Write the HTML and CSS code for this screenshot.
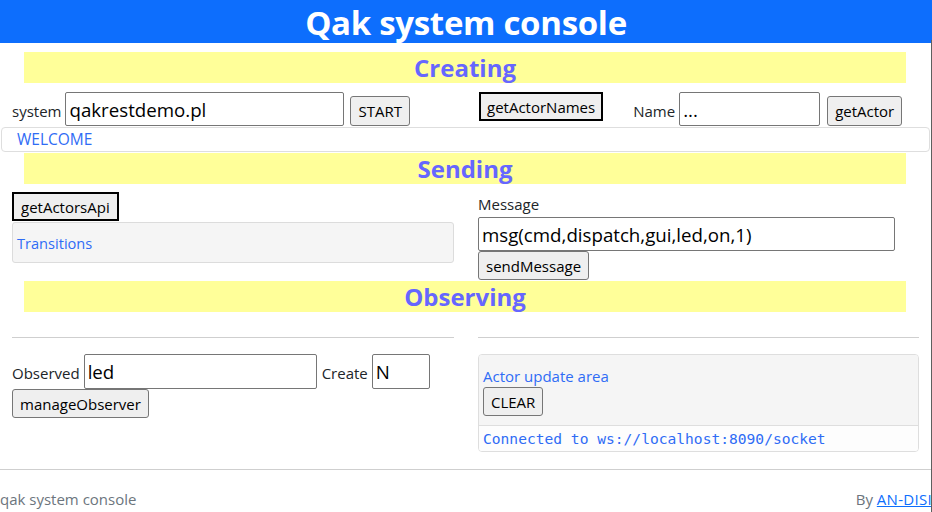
FILE: index.html
```html
<!DOCTYPE html>
<html lang="en">
<head>
<meta charset="utf-8">
<title>Qak system console</title>
<link rel="stylesheet" href="styles.css">
</head>
<body>
<header class="topbar"><h1>Qak system console</h1></header>

<h2 class="band band-first">Creating</h2>
<div class="cols create-row">
  <div class="col">
    <div class="inline-group">
      <label class="lbl">system</label>
      <input class="field field-system" type="text" value="qakrestdemo.pl">
      <button class="btn">START</button>
    </div>
  </div>
  <div class="col col-right-create">
    <button class="btn btn-focus">getActorNames</button>
    <div class="inline-group name-group">
      <label class="lbl">Name</label>
      <input class="field field-name" type="text" value="...">
      <button class="btn">getActor</button>
    </div>
  </div>
</div>
<div class="welcome">WELCOME</div>

<h2 class="band">Sending</h2>
<div class="cols send-row">
  <div class="col">
    <button class="btn btn-focus btn-api">getActorsApi</button>
    <div class="panel transitions">Transitions</div>
  </div>
  <div class="col">
    <label class="lbl lbl-block">Message</label>
    <input class="field field-msg" type="text" value="msg(cmd,dispatch,gui,led,on,1)">
    <button class="btn btn-block">sendMessage</button>
  </div>
</div>

<h2 class="band band-observe">Observing</h2>
<div class="cols observe-row">
  <div class="col">
    <hr class="rule">
    <div class="inline-group">
      <label class="lbl">Observed</label>
      <input class="field field-observed" type="text" value="led">
      <label class="lbl lbl-create">Create</label>
      <input class="field field-create" type="text" value="N">
    </div>
    <button class="btn btn-block">manageObserver</button>
  </div>
  <div class="col col-right">
    <hr class="rule">
    <div class="card">
      <div class="card-body">
        <div class="card-title">Actor update area</div>
        <button class="btn btn-block">CLEAR</button>
      </div>
      <div class="card-footer"><code>Connected to ws://localhost:8090/socket</code></div>
    </div>
  </div>
</div>

<footer class="footer">
  <span class="foot-left">qak system console</span>
  <span class="foot-right">By <a href="#">AN-DISI</a></span>
</footer>
<div class="edge"></div>
</body>
</html>
```

FILE: styles.css
```css
html, body {
  margin: 0;
  padding: 0;
}
body {
  width: 932px;
  height: 512px;
  overflow: hidden;
  position: relative;
  background: #fff;
  color: #212529;
  font-family: "Open Sans", "Noto Sans", sans-serif;
  font-size: 15px;
}
.topbar {
  background: #0d6efd;
  height: 43px;
  box-sizing: border-box;
  padding-top: 2px;
  display: flex;
  justify-content: center;
  align-items: flex-start;
}
.topbar h1 {
  margin: 0;
  color: #fff;
  font-size: 33px;
  font-weight: 700;
  line-height: 41px;
  letter-spacing: -0.3px;
}
.band {
  margin: 1px 26px 0 24px;
  height: 31px;
  line-height: 31px;
  background: #ffff99;
  color: #6666ff;
  font-size: 24px;
  font-weight: 700;
  text-align: center;
}
.band-first { margin-top: 9px; }
.band-observe { margin-top: 1px; }

.cols {
  display: grid;
  grid-template-columns: 466px 466px;
}
.col {
  padding: 0 12px;
  min-width: 0;
}
.col-right { padding-right: 13px; }

.create-row { padding-top: 9px; }
.inline-group {
  display: flex;
  align-items: baseline;
  gap: 4px;
}
.lbl {
  font-size: 15px;
  color: #212529;
}
.lbl-create { margin-left: 1px; }
.lbl-block {
  display: block;
  height: 25px;
  line-height: 24px;
}
.field {
  box-sizing: border-box;
  height: 34px;
  border: 1px solid #767676;
  border-radius: 2px;
  padding: 0 3px;
  font-family: "Open Sans", "Noto Sans", sans-serif;
  font-size: 18.7px;
  color: #000;
  background: #fff;
}
.field-system { width: 279px; }
.field-name { width: 141px; }
.field-msg { width: 417px; display: block; }
.field-observed { width: 233px; height: 35px; }
.field-create { width: 58px; height: 35px; }
.btn {
  box-sizing: border-box;
  height: 29px;
  padding: 0 7px;
  border: 1px solid #767676;
  border-radius: 3px;
  background: #efefef;
  color: #000;
  font-family: "Open Sans", "Noto Sans", sans-serif;
  font-size: 15px;
}
.inline-group .btn {
  margin-left: 2px;
  height: 30px;
  align-self: flex-end;
}
.btn-focus {
  height: 29px;
  border: 2px solid #000;
  border-radius: 0;
  padding: 0 6px;
}
.btn-api { padding: 0 7px; }
.btn-block { display: block; }
.col-right-create {
  display: flex;
  align-items: flex-start;
  padding-left: 13px;
}
.name-group { margin-left: 30px; }
.name-group .btn { margin-left: 3px; }

.welcome {
  box-sizing: border-box;
  margin: 1px 2px 0 1px;
  height: 25px;
  line-height: 23px;
  border: 1px solid #dedede;
  border-radius: 4px;
  padding-left: 15px;
  color: #2f6cf5;
  font-size: 15.5px;
}

.send-row { padding-top: 8px; }
.panel {
  box-sizing: border-box;
  background: #f5f5f5;
  border: 1px solid #dcdcdc;
  border-radius: 3px;
}
.transitions {
  margin-top: 1px;
  height: 41px;
  padding: 0 4px;
  line-height: 41px;
  color: #2f6cf5;
  font-size: 14.6px;
}

.observe-row { padding-top: 0; }
.rule {
  margin: 25px 0 16px;
  border: 0;
  border-top: 1px solid #cfcfcf;
  height: 0;
}
.card {
  box-sizing: border-box;
  height: 98px;
  border: 1px solid #dedede;
  border-radius: 4px;
  overflow: hidden;
}
.card-body {
  background: #f5f5f5;
  height: 71px;
  padding: 10px 4px 0;
  box-sizing: border-box;
  border-bottom: 1px solid #dedede;
}
.card-title {
  color: #2f6cf5;
  font-size: 15px;
  line-height: 22px;
}
.card-footer {
  background: #fdfdfd;
  height: 25px;
  padding: 0 4px;
  line-height: 25px;
}
.card-footer code {
  font-family: "DejaVu Sans Mono", "Liberation Mono", monospace;
  font-size: 14.6px;
  color: #2f6cf5;
}

.footer {
  position: absolute;
  left: 0;
  right: 0;
  top: 469px;
  border-top: 1px solid #cfcfcf;
  height: 42px;
  display: flex;
  justify-content: space-between;
  align-items: center;
  padding-top: 16px;
  box-sizing: border-box;
  color: #6c757d;
  font-size: 15px;
}
.foot-right a {
  color: #0d6efd;
  letter-spacing: 0.3px;
}
.edge {
  position: absolute;
  right: 0;
  top: 40px;
  bottom: 0;
  width: 1px;
  background: #5f5f5f;
}
```
